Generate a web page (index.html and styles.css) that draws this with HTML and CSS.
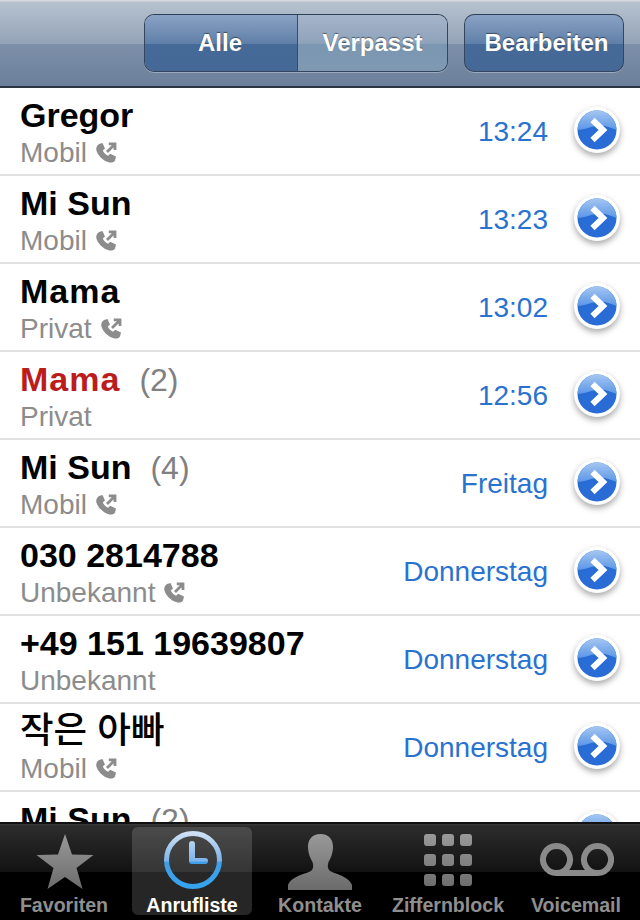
FILE: index.html
```html
<!DOCTYPE html>
<html lang="de">
<head>
    <meta charset="UTF-8">
    <title>Anrufliste</title>
    <link rel="stylesheet" href="styles.css">
</head>
<body>
<svg class="defs" width="0" height="0">
    <defs>
        <linearGradient id="discGloss" x1="0" y1="0" x2="0" y2="1">
            <stop offset="0" stop-color="#a4c6f2"/>
            <stop offset="1" stop-color="#5d96e6"/>
        </linearGradient>
        <linearGradient id="ringFill" gradientUnits="userSpaceOnUse" x1="0" y1="2" x2="0" y2="58">
            <stop offset="0" stop-color="#cfe0f4"/>
            <stop offset="0.5" stop-color="#7cb4ea"/>
            <stop offset="0.52" stop-color="#3f9fe8"/>
            <stop offset="1" stop-color="#35a4ee"/>
        </linearGradient>
        <linearGradient id="tabGrey" gradientUnits="userSpaceOnUse" x1="0" y1="0" x2="0" y2="60">
            <stop offset="0" stop-color="#9c9c9c"/>
            <stop offset="1" stop-color="#6a6a6a"/>
        </linearGradient>
        <symbol id="disclosure" viewBox="0 0 56 56">
            <circle cx="28" cy="26" r="23" fill="#fff"/>
            <circle cx="28" cy="26" r="19.500" fill="#2a6cd6"/>
            <path d="M8.500 26 A19.500 19.500 0 0 1 47.500 26 C40 23 36 21 28 22 C20 23 14 26 8.500 26 Z" fill="url(#discGloss)"/>
            <path d="M23.500 16 L34 26 L23.500 36" fill="none" stroke="#fff" stroke-width="6"/>
        </symbol>
        <symbol id="outgoing" viewBox="0 0 22 22">
            <path d="M4 2 L7.500 1 L10 6.500 L7.800 8.600 C8.600 10.800 10.600 12.800 13 13.800 L15.200 11.800 L21 14.600 L20 18.400 C18.800 20.600 15.800 21 13 20 C7.400 18 3 13.400 1.400 8.400 C0.800 6 1.800 3.400 4 2 Z" fill="#8c8c8c"/>
            <path d="M12 10 L19 3 M13.800 1.800 H20 V8" fill="none" stroke="#8c8c8c" stroke-width="2.800"/>
        </symbol>
    </defs>
</svg>

<div class="phone">
    <div class="navbar">
        <div class="segmented">
            <div class="seg seg-on">Alle</div>
            <div class="seg seg-off">Verpasst</div>
        </div>
        <div class="edit-btn">Bearbeiten</div>
    </div>

    <div class="calls">
        <div class="row">
            <div class="who"><div class="name">Gregor</div><div class="kind">Mobil <svg class="out"><use href="#outgoing"/></svg></div></div>
            <div class="when">13:24</div>
            <svg class="more"><use href="#disclosure"/></svg>
        </div>
        <div class="row">
            <div class="who"><div class="name">Mi Sun</div><div class="kind">Mobil <svg class="out"><use href="#outgoing"/></svg></div></div>
            <div class="when">13:23</div>
            <svg class="more"><use href="#disclosure"/></svg>
        </div>
        <div class="row">
            <div class="who"><div class="name"><span class="mama">Mama</span></div><div class="kind">Privat <svg class="out"><use href="#outgoing"/></svg></div></div>
            <div class="when">13:02</div>
            <svg class="more"><use href="#disclosure"/></svg>
        </div>
        <div class="row">
            <div class="who"><div class="name missed"><span class="mama">Mama</span><span class="count">(2)</span></div><div class="kind">Privat</div></div>
            <div class="when">12:56</div>
            <svg class="more"><use href="#disclosure"/></svg>
        </div>
        <div class="row">
            <div class="who"><div class="name">Mi Sun<span class="count">(4)</span></div><div class="kind">Mobil <svg class="out"><use href="#outgoing"/></svg></div></div>
            <div class="when">Freitag</div>
            <svg class="more"><use href="#disclosure"/></svg>
        </div>
        <div class="row">
            <div class="who"><div class="name">030 2814788</div><div class="kind">Unbekannt <svg class="out"><use href="#outgoing"/></svg></div></div>
            <div class="when">Donnerstag</div>
            <svg class="more"><use href="#disclosure"/></svg>
        </div>
        <div class="row">
            <div class="who"><div class="name">+49 151 19639807</div><div class="kind">Unbekannt</div></div>
            <div class="when">Donnerstag</div>
            <svg class="more"><use href="#disclosure"/></svg>
        </div>
        <div class="row">
            <div class="who"><div class="name korean">작은 아빠</div><div class="kind">Mobil <svg class="out"><use href="#outgoing"/></svg></div></div>
            <div class="when">Donnerstag</div>
            <svg class="more"><use href="#disclosure"/></svg>
        </div>
        <div class="row">
            <div class="who"><div class="name">Mi Sun<span class="count">(2)</span></div><div class="kind">Mobil</div></div>
            <div class="when">Donnerstag</div>
            <svg class="more"><use href="#disclosure"/></svg>
        </div>
    </div>

    <div class="tabbar">
        <div class="tab">
            <svg class="tab-icon" viewBox="0 0 64 60"><path d="M33 3 L40 23.500 L61.500 24 L44.500 37 L50.500 58 L33 46 L15.500 58 L21.500 37 L4.500 24 L26 23.500 Z" fill="url(#tabGrey)"/></svg>
            <span>Favoriten</span>
        </div>
        <div class="tab tab-on">
            <svg class="tab-icon" viewBox="0 0 64 60"><circle cx="33" cy="29" r="26.500" fill="none" stroke="url(#ringFill)" stroke-width="5"/><path d="M32 13 V30 H45" fill="none" stroke="url(#ringFill)" stroke-width="6" stroke-linecap="round" stroke-linejoin="round"/></svg>
            <span>Anrufliste</span>
        </div>
        <div class="tab">
            <svg class="tab-icon" viewBox="0 0 64 60"><path d="M32.500 3 C41 3 45.500 9 45 17 C44.700 22 43 27 40.500 31 C39.500 34 39.500 37 41 39 C45 43 60 44 64 54 L64 59 H0 V54 C4 44 20 43 24 39 C25.500 37 25.500 34 24.500 31 C22 27 20.300 22 20 17 C19.500 9 24 3 32.500 3 Z" fill="url(#tabGrey)"/></svg>
            <span>Kontakte</span>
        </div>
        <div class="tab">
            <svg class="tab-icon" viewBox="0 0 64 60">
                <g fill="url(#tabGrey)">
                    <rect x="8" y="3" width="12" height="12" rx="3"/><rect x="26" y="3" width="12" height="12" rx="3"/><rect x="44" y="3" width="12" height="12" rx="3"/>
                    <rect x="8" y="23" width="12" height="12" rx="3"/><rect x="26" y="23" width="12" height="12" rx="3"/><rect x="44" y="23" width="12" height="12" rx="3"/>
                    <rect x="8" y="43" width="12" height="12" rx="3"/><rect x="26" y="43" width="12" height="12" rx="3"/><rect x="44" y="43" width="12" height="12" rx="3"/>
                </g>
            </svg>
            <span>Ziffernblock</span>
        </div>
        <div class="tab">
            <svg class="tab-icon tab-wide" viewBox="0 0 76 60"><path d="M18.500 42 H59.500 M18.500 42 A13.500 13.500 0 1 1 18.510 42 M59.500 42 A13.500 13.500 0 1 0 59.490 42" fill="none" stroke="#8a8a8a" stroke-width="6"/></svg>
            <span>Voicemail</span>
        </div>
    </div>
</div>
</body>
</html>
```

FILE: styles.css
```css
html, body { margin: 0; padding: 0; }
body { background: #fff; font-family: "Liberation Sans", "Noto Sans CJK KR", sans-serif; }
.defs { display: block; height: 0; }

.phone { width: 640px; height: 920px; display: flex; flex-direction: column; overflow: hidden; }

/* top bar */
.navbar {
    flex: none;
    display: flex;
    justify-content: flex-end;
    gap: 16px;
    padding: 14px 16px 0 0;
    height: 72px;
    border-bottom: 2px solid #2b3440;
    background: linear-gradient(#d6dadd 0, #d6dadd 1px, #b6c2cf 2px, #93a3b7 44px, #7e90a9 44px, #6b7f9b 86px);
}
.segmented, .edit-btn {
    height: 58px;
    box-sizing: border-box;
    border: 1px solid #34465f;
    border-top-color: #2f3f55;
    border-radius: 10px;
    overflow: hidden;
    box-shadow: 0 1px 0 rgba(255,255,255,.3);
}
.segmented { display: flex; width: 304px; }
.seg, .edit-btn {
    display: flex;
    align-items: center;
    justify-content: center;
    box-sizing: border-box;
    color: #fff;
    font-weight: bold;
    font-size: 24px;
    text-shadow: 0 -1px 1px rgba(0,0,0,.45);
}
.seg-on, .edit-btn { background: linear-gradient(#8aa2c4 0, #5f7fa8 29px, #466a98 29px, #456897 100%); }
.seg-on { width: 153px; border-right: 1px solid #2c4e7e; padding-right: 2px; }
.seg-off { flex: 1; background: linear-gradient(#a5b5ca 0, #8da2ba 29px, #7b96b1 29px, #7f99b3 100%); }
.edit-btn { width: 160px; padding-left: 5px; }

/* list */
.calls { flex: 1; overflow: hidden; min-height: 0; }
.row {
    height: 88px;
    box-sizing: border-box;
    border-bottom: 2px solid #e0e0e0;
    display: flex;
    align-items: center;
    padding: 2px 15px 0 20px;
}
.who { flex: 1; }
.name { font-size: 34px; font-weight: bold; line-height: 42px; color: #000; white-space: nowrap; }
.name.korean { font-size: 36.5px; font-weight: 500; }
.mama { letter-spacing: 1px; }
.missed { color: #bb1c1c; }
.count { font-size: 32px; line-height: 1; font-weight: normal; color: #808080; margin-left: 19px; }
.kind { font-size: 28px; line-height: 34px; color: #8c8c8c; display: flex; align-items: center; gap: 8px; }
.out { width: 22px; height: 22px; }
.when { font-size: 28px; color: #2a72d0; margin-right: 21px; }
.more { width: 56px; height: 56px; flex: none; filter: drop-shadow(0 3px 3px rgba(0,0,0,.35)); }

/* bottom tabs */
.tabbar {
    height: 98px;
    flex: none;
    box-sizing: border-box;
    display: flex;
    padding: 3px 0 5px;
    border-top: 2px solid #111;
    background: linear-gradient(#3c3c3c 0, #2c2c2c 2px, #121212 48px, #000 48px);
}
.tab {
    width: 128px;
    display: flex;
    flex-direction: column;
    align-items: center;
    justify-content: flex-end;
    color: #8f8f8f;
    font-size: 19.6px;
    font-weight: bold;
    border-radius: 6px;
    white-space: nowrap;
}
.tab span { line-height: 20px; }
.tab-on { background: rgba(255,255,255,.15); color: #fff; width: 120px; margin: 0 4px; }
.tab-icon { width: 64px; height: 60px; margin-bottom: 4px; }
.tab-wide { width: 76px; }
```
